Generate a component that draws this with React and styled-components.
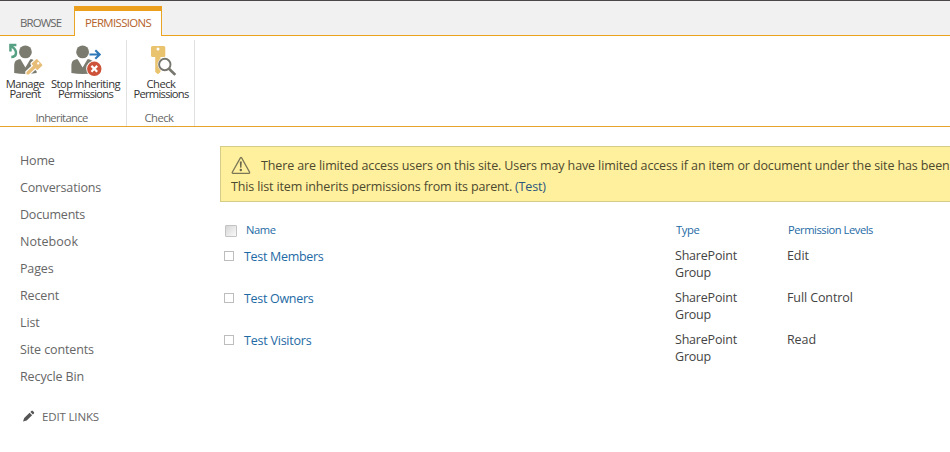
import React from "react";
import styled, { createGlobalStyle } from "styled-components";

const GlobalStyle = createGlobalStyle`
  * { box-sizing: border-box; }
  body {
    margin: 0;
    background: #fff;
    color: #444;
    font-family: "Open Sans", "Noto Sans", sans-serif;
    font-size: 12.5px;
    overflow: hidden;
  }
`;

const Page = styled.div`
  width: 950px;
  height: 452px;
  overflow: hidden;
  background: #fff;
  border-top: 1px solid #4b4648;
`;

const TabBar = styled.div`
  display: flex;
  height: 34px;
  padding-top: 5px;
  background: #f1f1f1;
`;

const TabRule = styled.div`
  display: grid;
  grid-template-columns: 75px 86px 1fr;
  height: 1px;
  background: #eba21c;
  &::before {
    content: "";
    grid-column: 2;
    background: #fff;
  }
`;

const Tab = styled.div`
  height: 29px;
  width: ${(p) => p.$width}px;
  padding-left: ${(p) => p.$inset}px;
  font-size: 11.4px;
  line-height: ${(p) => (p.$active ? 24 : 34)}px;
  letter-spacing: ${(p) => p.$track}px;
  white-space: nowrap;
  color: ${(p) => (p.$active ? "#b5622c" : "#666")};
  ${(p) =>
    p.$active &&
    `background: #fff;
     border: 1px solid #e9a525;
     border-top: 5px solid #eb9f1c;
     border-bottom: 0;`}
`;

const Ribbon = styled.div`
  display: flex;
  height: 91px;
  padding-top: 4px;
  border-bottom: 1px solid #e5a52c;
`;

const RibbonGroup = styled.div`
  display: flex;
  flex-direction: column;
  justify-content: space-between;
  width: ${(p) => p.$width}px;
  height: 86px;
  border-right: 1px solid #e1e1e1;
`;

const RibbonButtons = styled.div`
  display: flex;
  padding-left: ${(p) => p.$inset}px;
`;

const RibbonButton = styled.div`
  display: flex;
  flex-direction: column;
  align-items: center;
  width: ${(p) => p.$width}px;
  padding-top: 3px;
  color: #333;
  svg { display: block; margin-bottom: 4px; overflow: visible; }
`;

const ButtonLine = styled.span`
  height: 10px;
  font-size: 11.2px;
  line-height: 10px;
  white-space: nowrap;
  letter-spacing: ${(p) => p.$track}px;
`;

const GroupLabel = styled.div`
  height: 16px;
  text-align: center;
  font-size: 11.2px;
  line-height: 16px;
  letter-spacing: ${(p) => p.$track}px;
  color: #666;
  padding-right: 3px;
`;

const Body = styled.div`
  display: flex;
`;

const Nav = styled.nav`
  width: 220px;
  flex: none;
  padding: 20px 0 0 20px;
`;

const NavItem = styled.div`
  height: 27px;
  line-height: 27px;
  color: #666;
  letter-spacing: ${(p) => p.$track}px;
`;

const EditLinks = styled.div`
  display: flex;
  align-items: center;
  height: 20px;
  margin-top: 16px;
  padding-left: 2px;
  gap: 7px;
  font-size: 11.5px;
  letter-spacing: -0.15px;
  color: #666;
`;

const Main = styled.main`
  flex: none;
  width: 760px;
  padding-top: 19px;
`;

const Banner = styled.div`
  height: 56px;
  padding: 8px 0 0 10px;
  background: #fff09d;
  border: 1px solid #d5cc88;
  white-space: nowrap;
`;

const BannerLine = styled.div`
  display: flex;
  align-items: center;
  height: 21px;
  color: #4d492f;
  letter-spacing: ${(p) => p.$track}px;
  svg { margin-right: 10px; flex: none; }
`;

const Link = styled.a`
  color: ${(p) => p.$color || "#1e6aa5"};
  margin-left: ${(p) => p.$gap || 0}px;
`;

const Grid = styled.div`
  margin-top: 18px;
`;

const Row = styled.div`
  display: grid;
  grid-template-columns: 24px 431px 112px 1fr;
  height: ${(p) => (p.$head ? 27 : 42)}px;
  font-size: ${(p) => (p.$head ? 11.2 : 12.5)}px;
  line-height: ${(p) => (p.$head ? 20 : 17)}px;
`;

const Cell = styled.div`
  padding-left: ${(p) => p.$inset || 0}px;
  padding-top: ${(p) => p.$drop || 0}px;
  width: ${(p) => (p.$narrow ? "80px" : "auto")};
  letter-spacing: ${(p) => p.$track || 0}px;
  color: ${(p) => (p.$link ? "#1e6aa5" : "#444")};
`;

const Checkbox = styled.div`
  width: 10px;
  height: 10px;
  margin: 4px 0 0 4px;
  border: 1px solid #bdbdbd;
  background: #fff;
`;

const HeadCheckbox = styled.div`
  width: 12px;
  height: 12px;
  margin: 5px 0 0 5px;
  border: 1px solid #c3c3c3;
  border-radius: 1px;
  background: linear-gradient(135deg, #d6d6d6, #fafafa);
`;

const Person = ({ x }) => (
  <g fill="#7b7b70" transform={`translate(${x} 0)`}>
    <circle cx="0" cy="8.9" r="6.4" />
    <path d="M-11.200 30v-7c0-4.800 2-6.800 6.300-6.800L0 24.500l4.900-8.300c4.300 0 6.300 2 6.300 6.800v7q-11.200 2-22.400 0z" />
  </g>
);

const ManageIcon = () => (
  <svg width="32" height="32" viewBox="0 0 32 32">
    <Person x={16.4} />
    <g transform="translate(25.3 24) rotate(47)">
      <path
        d="M-3.600-8h7.200q1.400 0 1.400 1.400v5.800Q5 .6 3.600.6H2.200v8.900L0 11.500l-2.200-2V.6h-1.400Q-5 .6-5-.8v-5.800Q-5-8-3.600-8z"
        fill="#e7bd77"
        stroke="#fff"
        strokeWidth="1.200"
      />
      <circle cx="0" cy="-5.400" r="1.200" fill="#fff" />
    </g>
    <path d="M2 3C5.500 4.800 8 7.500 7.600 10.500 7.200 13 5 14.300 2.300 14.200" fill="none" stroke="#fff" strokeWidth="4" />
    <path d="M1.300 2.500C5 4.800 7.400 7.500 7 10.300 6.700 12.700 5 14 2.300 14" fill="none" stroke="#56a083" strokeWidth="2.500" />
    <path d="M.2.800H7.400V3.300H2.700V8.600H.2z" fill="#56a083" />
  </svg>
);

const StopIcon = () => (
  <svg width="32" height="32" viewBox="0 0 32 32">
    <Person x={12.6} />
    <path d="M19.500 11.500h10M25.300 7.200l4.400 4.300-4.400 4.300" fill="none" stroke="#2f78b7" strokeWidth="2.100" />
    <circle cx="24.3" cy="25.800" r="8.1" fill="#fff" />
    <circle cx="24.3" cy="25.800" r="7.2" fill="#ce5239" />
    <path d="M21.400 22.900l5.800 5.800m0-5.800l-5.800 5.800" stroke="#fff" strokeWidth="2.200" />
  </svg>
);

const CheckIcon = () => (
  <svg width="32" height="32" viewBox="0 0 32 32">
    <path d="M7.500 3h11.300q1.500 0 1.500 1.500v8q0 1.500-1.500 1.500h-3.300V29L13 31.200l-2.800-2.200V14H7.500Q6 14 6 12.500v-8Q6 3 7.500 3z" fill="#eac36f" />
    <circle cx="13" cy="5.900" r="1.500" fill="#fff" />
    <circle cx="19.800" cy="21.500" r="7.200" fill="#fff" />
    <circle cx="19.800" cy="21.500" r="5.700" fill="#fff" stroke="#77776f" strokeWidth="1.900" />
    <path d="M24 25.700l6.300 6.200" stroke="#77776f" strokeWidth="2.700" />
  </svg>
);

const WarningIcon = () => (
  <svg width="20" height="19" viewBox="0 0 20 19">
    <path
      d="M9.500 1.700Q10 1.200 10.500 1.700L18.600 16.200Q18.700 17.300 17.700 17.300H1.900Q.9 17.300 1.300 16.200z"
      fill="none"
      stroke="#7b7656"
      strokeWidth="1.300"
    />
    <path d="M8.800 5.500h2l-.4 6.200H9.200z" fill="#69654b" />
    <circle cx="9.800" cy="14" r="1.200" fill="#69654b" />
  </svg>
);

const PencilIcon = () => (
  <svg width="13" height="13" viewBox="0 0 13 13">
    <path
      d="M1 11.500l1.200-3.600L7.600 2.700l2.500 2.500L4.700 10.400zM8.400 1.900l1-1q.7-.6 1.400 0l1.100 1.100q.6.700 0 1.400l-1 1z"
      fill="#555"
    />
  </svg>
);

const NAV = [
  ["Home", -0.15],
  ["Conversations", -0.15],
  ["Documents", -0.2],
  ["Notebook", 0.05],
  ["Pages", -0.15],
  ["Recent", -0.15],
  ["List", -0.1],
  ["Site contents", -0.12],
  ["Recycle Bin", -0.1],
];

const GROUPS = [
  { name: "Test Members", level: "Edit", track: -0.3 },
  { name: "Test Owners", level: "Full Control", track: -0.3 },
  { name: "Test Visitors", level: "Read", track: -0.22 },
];

export default function App() {
  return (
    <Page>
      <GlobalStyle />
      <TabBar>
        <Tab $width={74} $inset={20} $track={-0.85}>BROWSE</Tab>
        <Tab $active $width={88} $inset={10} $track={-0.62}>PERMISSIONS</Tab>
      </TabBar>
      <TabRule />
      <Ribbon>
        <RibbonGroup $width={127}>
          <RibbonButtons $inset={3}>
            <RibbonButton $width={44}>
              <ManageIcon />
              <ButtonLine $track={-0.5}>Manage</ButtonLine>
              <ButtonLine $track={-0.6}>Parent</ButtonLine>
            </RibbonButton>
            <RibbonButton $width={77}>
              <StopIcon />
              <ButtonLine $track={-0.52}>Stop Inheriting</ButtonLine>
              <ButtonLine $track={-0.75}>Permissions</ButtonLine>
            </RibbonButton>
          </RibbonButtons>
          <GroupLabel $track={-0.65}>Inheritance</GroupLabel>
        </RibbonGroup>
        <RibbonGroup $width={68}>
          <RibbonButtons $inset={3}>
            <RibbonButton $width={62}>
              <CheckIcon />
              <ButtonLine $track={-0.5}>Check</ButtonLine>
              <ButtonLine $track={-0.75}>Permissions</ButtonLine>
            </RibbonButton>
          </RibbonButtons>
          <GroupLabel $track={-0.5}>Check</GroupLabel>
        </RibbonGroup>
      </Ribbon>
      <Body>
        <Nav>
          {NAV.map(([label, track]) => (
            <NavItem key={label} $track={track}>{label}</NavItem>
          ))}
          <EditLinks>
            <PencilIcon />
            EDIT LINKS
          </EditLinks>
        </Nav>
        <Main>
          <Banner>
            <BannerLine $track={-0.12}>
              <WarningIcon />
              There are limited access users on this site. Users may have limited access if an item or document under the site has been
            </BannerLine>
            <BannerLine $track={-0.14}>
              This list item inherits permissions from its parent.
              <Link $color="#2c577f" $gap={3}>(Test)</Link>
            </BannerLine>
          </Banner>
          <Grid>
            <Row $head>
              <HeadCheckbox />
              <Cell $link $inset={2} $track={-0.45}>Name</Cell>
              <Cell $link $inset={1} $track={-0.4}>Type</Cell>
              <Cell $link $inset={1} $track={-0.47}>Permission Levels</Cell>
            </Row>
            {GROUPS.map((g) => (
              <Row key={g.name}>
                <Checkbox />
                <Cell $link $drop={1} $track={g.track}>{g.name}</Cell>
                <Cell $narrow $track={-0.2}>SharePoint Group</Cell>
                <Cell $track={-0.1}>{g.level}</Cell>
              </Row>
            ))}
          </Grid>
        </Main>
      </Body>
    </Page>
  );
}
